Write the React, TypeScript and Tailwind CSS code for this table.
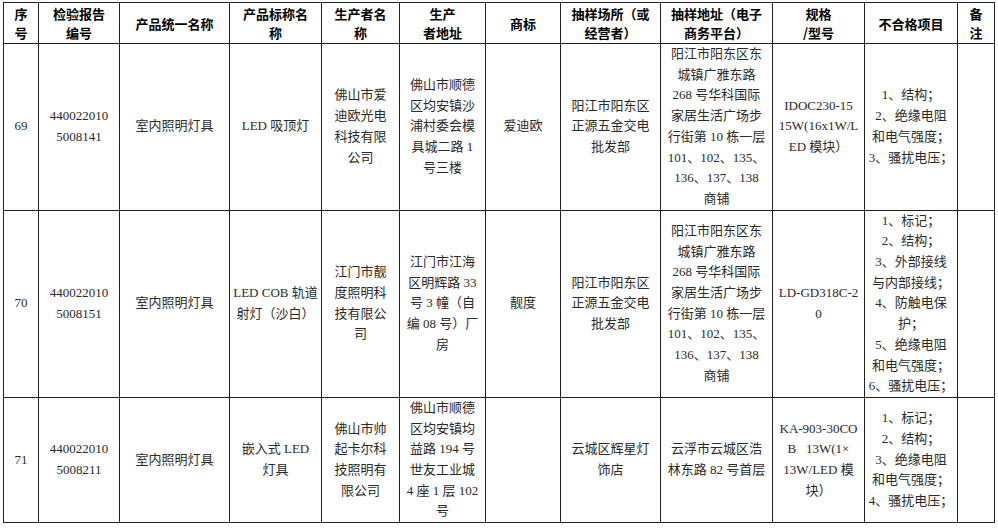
import React from "react";

type Row = {
  no: string;
  report: string[];
  category: string[];
  product: string[];
  maker: string[];
  makerAddr: string[];
  brand: string[];
  shop: string[];
  shopAddr: string[];
  model: string[];
  failed: string[];
};

const headers = [
  ["序", "号"],
  ["检验报告", "编号"],
  ["产品统一名称"],
  ["产品标称名", "称"],
  ["生产者名", "称"],
  ["生产", "者地址"],
  ["商标"],
  ["抽样场所（或", "经营者）"],
  ["抽样地址（电子", "商务平台）"],
  ["规格", "/型号"],
  ["不合格项目"],
  ["备", "注"],
];

const widths = [35, 81, 110, 92, 78, 86, 75, 100, 112, 92, 93, 37];

const yangjiangAddr = [
  "阳江市阳东区东",
  "城镇广雅东路",
  "268 号华科国际",
  "家居生活广场步",
  "行街第 10 栋一层",
  "101、102、135、",
  "136、137、138",
  "商铺",
];

const rows: Row[] = [
  {
    no: "69",
    report: ["440022010", "5008141"],
    category: ["室内照明灯具"],
    product: ["LED 吸顶灯"],
    maker: ["佛山市爱", "迪欧光电", "科技有限", "公司"],
    makerAddr: ["佛山市顺德", "区均安镇沙", "浦村委会模", "具城二路 1", "号三楼"],
    brand: ["爱迪欧"],
    shop: ["阳江市阳东区", "正源五金交电", "批发部"],
    shopAddr: yangjiangAddr,
    model: ["IDOC230-15", "15W(16x1W/L", "ED 模块）"],
    failed: ["1、结构；", "2、绝缘电阻", "和电气强度；", "3、骚扰电压；"],
  },
  {
    no: "70",
    report: ["440022010", "5008151"],
    category: ["室内照明灯具"],
    product: ["LED COB 轨道", "射灯（沙白）"],
    maker: ["江门市靓", "度照明科", "技有限公", "司"],
    makerAddr: ["江门市江海", "区明辉路 33", "号 3 幢（自", "编 08 号）厂", "房"],
    brand: ["靓度"],
    shop: ["阳江市阳东区", "正源五金交电", "批发部"],
    shopAddr: yangjiangAddr,
    model: ["LD-GD318C-2", "0"],
    failed: [
      "1、标记；",
      "2、结构；",
      "3、外部接线",
      "与内部接线；",
      "4、防触电保",
      "护；",
      "5、绝缘电阻",
      "和电气强度；",
      "6、骚扰电压；",
    ],
  },
  {
    no: "71",
    report: ["440022010", "5008211"],
    category: ["室内照明灯具"],
    product: ["嵌入式 LED", "灯具"],
    maker: ["佛山市帅", "起卡尔科", "技照明有", "限公司"],
    makerAddr: ["佛山市顺德", "区均安镇均", "益路 194 号", "世友工业城", "4 座 1 层 102", "号"],
    brand: [],
    shop: ["云城区辉星灯", "饰店"],
    shopAddr: ["云浮市云城区浩", "林东路 82 号首层"],
    model: ["KA-903-30CO", "B\u00a0\u00a0 13W(1×", "13W/LED 模", "块）"],
    failed: ["1、标记；", "2、结构；", "3、绝缘电阻", "和电气强度；", "4、骚扰电压；"],
  },
];

function Lines({ lines }: { lines: string[] }) {
  return (
    <>
      {lines.map((l, i) => (
        <div key={i} className="whitespace-pre">
          {l}
        </div>
      ))}
    </>
  );
}

export default function App() {
  return (
    <div className="min-h-[528px] w-[998px] bg-white pl-[3px] pt-[2px]">
      <table
        className="table-fixed border-collapse text-center"
        style={{ width: 991 }}
      >
        <colgroup>
          {widths.map((w, i) => (
            <col key={i} style={{ width: w }} />
          ))}
        </colgroup>
        <thead>
          <tr className="h-[41px]">
            {headers.map((h, i) => (
              <th
                key={i}
                className="border border-[#222] p-0 align-middle font-['Noto_Sans_CJK_SC',sans-serif] text-[13px] font-bold leading-[19px] text-black"
              >
                <Lines lines={h} />
              </th>
            ))}
          </tr>
        </thead>
        <tbody className="font-['Liberation_Serif','Noto_Sans_CJK_SC',serif] text-[13px] leading-[20.7px] text-[#2a2a2a]">
          {rows.map((r) => {
            const cells = [
              [r.no],
              r.report,
              r.category,
              r.product,
              r.maker,
              r.makerAddr,
              r.brand,
              r.shop,
              r.shopAddr,
              r.model,
              r.failed,
              [],
            ];
            return (
              <tr key={r.no}>
                {cells.map((c, i) => (
                  <td
                    key={i}
                    className="border border-[#222] p-0 align-middle"
                  >
                    <Lines lines={c} />
                  </td>
                ))}
              </tr>
            );
          })}
        </tbody>
      </table>
    </div>
  );
}
